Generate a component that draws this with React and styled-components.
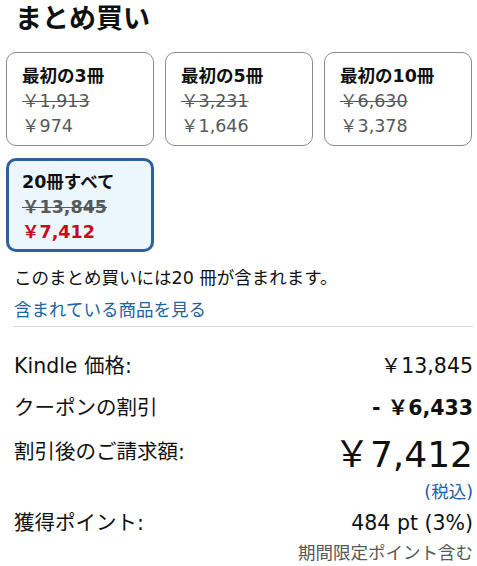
import styled, { createGlobalStyle } from "styled-components";

const Global = createGlobalStyle`
  body {
    margin: 0;
    background: #fff;
    font-family: "DejaVu Sans", "Noto Sans CJK JP", sans-serif;
    color: #0f1111;
  }
`;

const Page = styled.div`
  width: 477px;
  padding: 0 4px 0 6px;
  box-sizing: border-box;
`;

const Title = styled.h1`
  margin: 0;
  padding: 4px 0 0 9px;
  font-size: 27px;
  font-weight: 700;
  line-height: 30px;
`;

const Grid = styled.div`
  display: grid;
  grid-template-columns: repeat(3, 148px);
  column-gap: 11px;
  row-gap: 12px;
  margin-top: 18px;
`;

const Card = styled.div`
  height: 94px;
  box-sizing: border-box;
  border-radius: 10px;
  border: ${(p) => (p.$selected ? "3px solid #2b6299" : "1px solid #888c8c")};
  background: ${(p) => (p.$selected ? "#ecf6fd" : "#fff")};
  padding: ${(p) => (p.$selected ? "9px 0 0 13px" : "11px 0 0 15px")};
  display: flex;
  flex-direction: column;
`;

const CardName = styled.div`
  font-size: 17.5px;
  font-weight: 700;
  line-height: 25px;
  color: #0f1111;
`;

const OldPrice = styled.div`
  font-size: 17.5px;
  line-height: 25px;
  color: #565959;
  text-decoration: line-through;
  font-weight: ${(p) => (p.$bold ? 700 : 400)};
`;

const NewPrice = styled.div`
  font-size: 17.5px;
  line-height: 24px;
  color: ${(p) => (p.$selected ? "#c40c1e" : "#565959")};
  font-weight: ${(p) => (p.$selected ? 700 : 400)};
`;

const Info = styled.div`
  padding: 0 0 0 8px;
  margin-top: 14px;
  font-size: 17.5px;
  line-height: 24px;
`;

const Link = styled.a`
  display: block;
  color: #2162a1;
  font-size: 17.5px;
  line-height: 24px;
  margin-top: 8px;
  text-decoration: none;
`;

const Divider = styled.hr`
  border: none;
  border-top: 1px solid #d5d9d9;
  margin: 4px 0 0 8px;
`;

const Rows = styled.div`
  padding: 0 0 0 8px;
  margin-top: 25px;
`;

const Row = styled.div`
  display: flex;
  justify-content: space-between;
  align-items: ${(p) => p.$align || "center"};
  margin-top: ${(p) => p.$mt || 0}px;
`;

const Label = styled.span`
  font-size: 20.5px;
  line-height: 28px;
  margin-top: ${(p) => p.$mt || 0}px;
`;

const Value = styled.span`
  font-size: ${(p) => p.$size || 20.5}px;
  line-height: ${(p) => (p.$size ? 44 : 28)}px;
  font-weight: ${(p) => (p.$bold ? 700 : 400)};
  text-align: right;
`;

const Note = styled.div`
  text-align: right;
  font-size: 17.5px;
  line-height: 22px;
  color: ${(p) => p.$color};
  margin-top: ${(p) => p.$mt || 0}px;
`;

const bundles = [
  { name: "最初の3冊", old: "￥1,913", now: "￥974" },
  { name: "最初の5冊", old: "￥3,231", now: "￥1,646" },
  { name: "最初の10冊", old: "￥6,630", now: "￥3,378" },
  { name: "20冊すべて", old: "￥13,845", now: "￥7,412", selected: true },
];

export default function App() {
  return (
    <Page>
      <Global />
      <Title>まとめ買い</Title>
      <Grid>
        {bundles.map((b) => (
          <Card key={b.name} $selected={b.selected}>
            <CardName>{b.name}</CardName>
            <OldPrice $bold={b.selected}>{b.old}</OldPrice>
            <NewPrice $selected={b.selected}>{b.now}</NewPrice>
          </Card>
        ))}
      </Grid>
      <Info>
        このまとめ買いには20 冊が含まれます。
        <Link href="#">含まれている商品を見る</Link>
      </Info>
      <Divider />
      <Rows>
        <Row>
          <Label>Kindle 価格:</Label>
          <Value>￥13,845</Value>
        </Row>
        <Row $mt={14}>
          <Label>クーポンの割引</Label>
          <Value $bold>- ￥6,433</Value>
        </Row>
        <Row $mt={11} $align="flex-start">
          <Label $mt={5}>割引後のご請求額:</Label>
          <Value $size={36}>￥7,412</Value>
        </Row>
        <Note $color="#2162a1" $mt={4}>(税込)</Note>
        <Row $mt={6}>
          <Label>獲得ポイント:</Label>
          <Value>484 pt (3%)</Value>
        </Row>
        <Note $color="#565959" $mt={5}>期間限定ポイント含む</Note>
      </Rows>
    </Page>
  );
}
